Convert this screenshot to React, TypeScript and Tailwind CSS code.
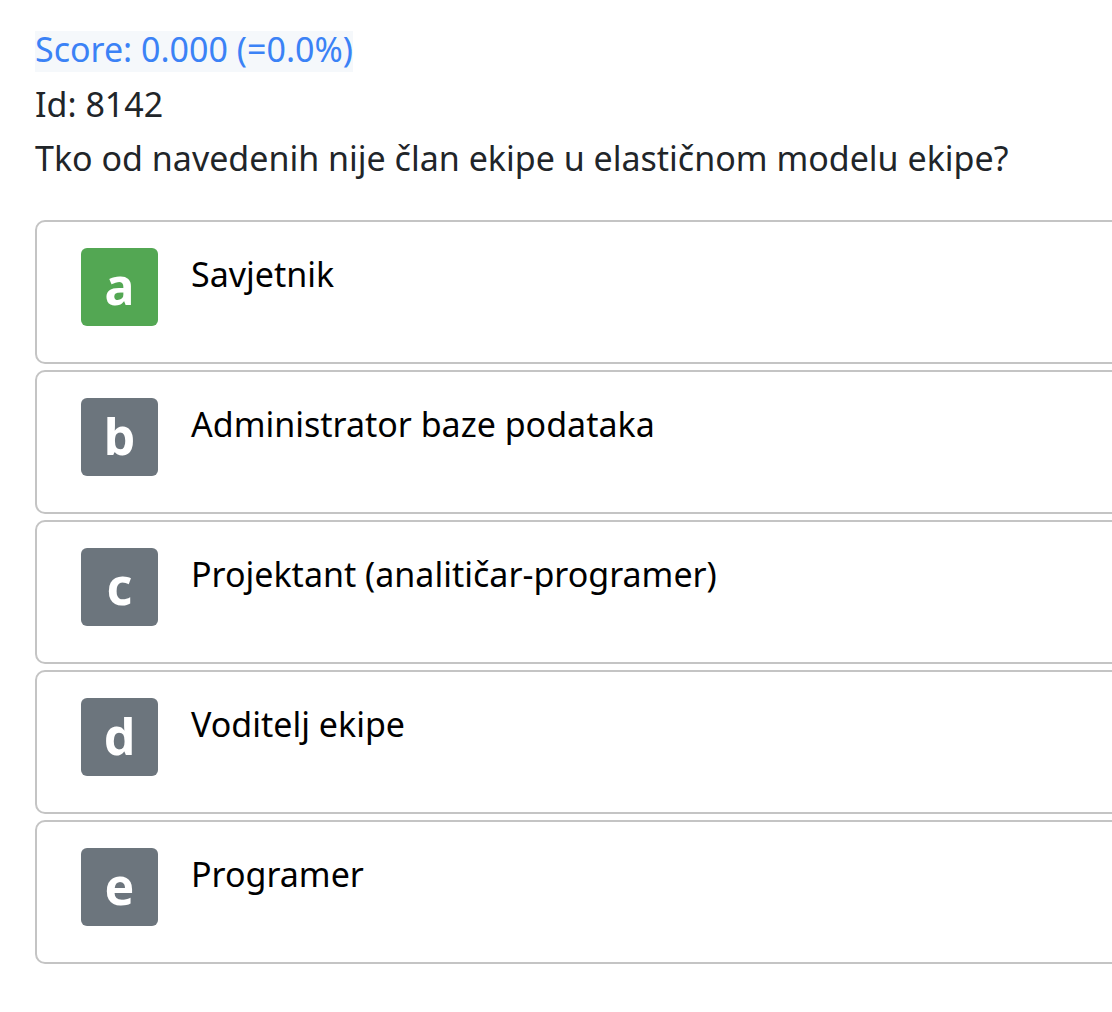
import React from 'react';

const options = [
  { key: 'a', text: 'Savjetnik', correct: true },
  { key: 'b', text: 'Administrator baze podataka' },
  { key: 'c', text: 'Projektant (analitičar-programer)' },
  { key: 'd', text: 'Voditelj ekipe' },
  { key: 'e', text: 'Programer' },
];

const App: React.FC = () => {
  return (
    <div
      className="min-h-screen bg-white overflow-hidden pl-[35px] pt-[31px] text-[#212529] text-[34px]"
      style={{ fontFamily: '"Noto Sans", "Open Sans", sans-serif' }}
    >
      <div className="flex">
        <span className="inline-block h-[41px] leading-[36px] bg-[#f5f8fb] text-[#3b82f6]">Score: 0.000 (=0.0%)</span>
      </div>
      <div className="mt-[5px] leading-[54px]">Id: 8142</div>
      <div className="leading-[54px]">Tko od navedenih nije član ekipe u elastičnom modelu ekipe?</div>

      <div className="mt-[35px] w-[1200px] flex flex-col gap-[6px]">
        {options.map(opt => (
          <div
            key={opt.key}
            className="h-[144px] border-2 border-[#c4c4c4] rounded-[10px] pl-[44px] pt-[26px] flex items-start"
          >
            <div
              className={`w-[77px] h-[78px] rounded-[6px] flex items-center justify-center text-white font-bold text-[50px] leading-none pb-[2px] ${
                opt.correct ? 'bg-[#53a753]' : 'bg-[#6c757d]'
              }`}
            >
              {opt.key}
            </div>
            <div className="ml-[33px] mt-[4px] leading-[44px] text-black">{opt.text}</div>
          </div>
        ))}
      </div>
    </div>
  );
};

export default App;
